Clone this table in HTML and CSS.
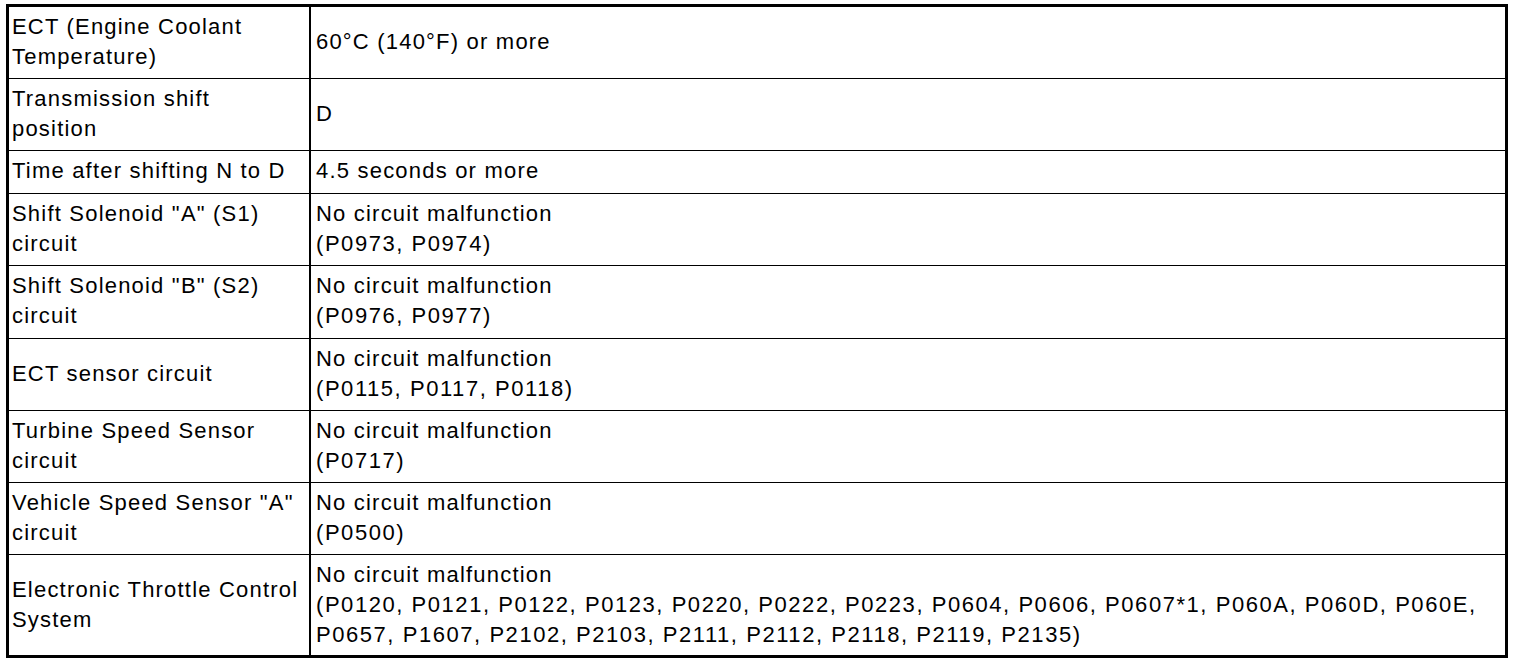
FILE: index.html
```html
<!DOCTYPE html>
<html>
<head>
<meta charset="utf-8">
<link rel="stylesheet" href="styles.css">
</head>
<body>
<table class="spec">
  <tr><td class="k">ECT (Engine Coolant<br>Temperature)</td><td class="v">60°C (140°F) or more</td></tr>
  <tr><td class="k">Transmission shift<br>position</td><td class="v">D</td></tr>
  <tr class="tall"><td class="k">Time after shifting N to D</td><td class="v">4.5 seconds or more</td></tr>
  <tr><td class="k">Shift Solenoid "A" (S1)<br>circuit</td><td class="v">No circuit malfunction<br><span class="codes">(P0973, P0974)</span></td></tr>
  <tr class="tall"><td class="k">Shift Solenoid "B" (S2)<br>circuit</td><td class="v">No circuit malfunction<br><span class="codes">(P0976, P0977)</span></td></tr>
  <tr><td class="k">ECT sensor circuit</td><td class="v">No circuit malfunction<br><span class="codes">(P0115, P0117, P0118)</span></td></tr>
  <tr><td class="k">Turbine Speed Sensor<br>circuit</td><td class="v">No circuit malfunction<br><span class="codes">(P0717)</span></td></tr>
  <tr><td class="k">Vehicle Speed Sensor "A"<br>circuit</td><td class="v">No circuit malfunction<br><span class="codes">(P0500)</span></td></tr>
  <tr class="last"><td class="k">Electronic Throttle Control<br>System</td><td class="v">No circuit malfunction<br><span class="codes">(P0120, P0121, P0122, P0123, P0220, P0222, P0223, P0604, P0606, P0607*1, P060A, P060D, P060E,<br>P0657, P1607, P2102, P2103, P2111, P2112, P2118, P2119, P2135)</span></td></tr>
</table>
</body>
</html>
```
FILE: styles.css
```css
html, body {
  margin: 0;
  padding: 0;
  background: #fff;
}
body {
  padding: 4px 0 0 6px;
}
.spec {
  border-collapse: collapse;
  width: 1502px;
  border: 3px solid #000;
  font-family: "Liberation Sans", Arial, sans-serif;
  font-size: 22px;
  line-height: 30px;
  letter-spacing: 1.2px;
  color: #000;
}
.spec td {
  border: 1px solid #000;
  padding: 5px 4px 6px;
  vertical-align: middle;
  white-space: nowrap;
}
.spec td.k {
  width: 293px;
  padding-left: 3px;
  border-right: 2px solid #000;
}
.spec td.v {
  padding-left: 5px;
}
.spec tr.tall td {
  padding-bottom: 7px;
}
.spec tr.last td {
  padding-bottom: 5px;
}
.codes {
  letter-spacing: 1.55px;
}
```
